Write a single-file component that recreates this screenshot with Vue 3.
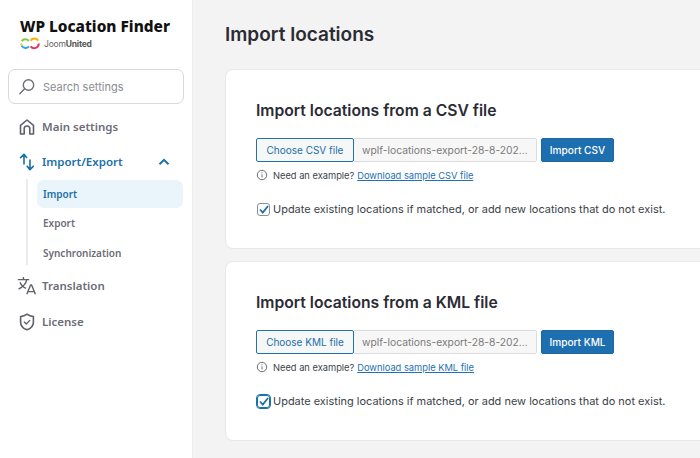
<script setup>
const cards = [
  { title: 'Import locations from a CSV file', kind: 'CSV', focus: false },
  { title: 'Import locations from a KML file', kind: 'KML', focus: true }
]
</script>

<template>
  <div class="page">
    <aside class="side">
      <div class="brand">
        <div class="brand-name">WP Location Finder</div>
        <div class="brand-sub">
          <svg width="20" height="13" viewBox="0 0 20 13" fill="none" stroke-width="2">
            <path d="M1.6 4.2A4.600 4.600 0 0 1 8.800 4" stroke="#8cc63f"/>
            <path d="M1.4 6.5a4.600 4.600 0 0 0 .2 2" stroke="#f7c600"/>
            <path d="M1.6 8.8A4.600 4.600 0 0 0 9 9.400" stroke="#29abe2"/>
            <path d="M10.6 3.6A4.600 4.600 0 0 1 18.200 3.600" stroke="#f9b000"/>
            <path d="M18.8 6.5A4.600 4.600 0 0 1 10.600 9.400" stroke="#ed2f59"/>
          </svg>
          <span class="joom">Joom<b>United</b></span>
        </div>
      </div>

      <div class="search">
        <svg width="18" height="18" viewBox="0 0 18 18" fill="none" stroke="#6f6f78" stroke-width="1.4">
          <circle cx="10.5" cy="7" r="5.2"/>
          <path d="M6.6 10.8 1.8 15.8" stroke-linecap="round"/>
        </svg>
        <span>Search settings</span>
      </div>

      <nav class="nav">
        <div class="item">
          <svg class="ico" width="20" height="20" viewBox="0 0 20 20" fill="none" stroke="#5f6069" stroke-width="1.6" stroke-linejoin="round">
            <path d="M3.5 17V8.4L10 3l6.5 5.4V17h-3.7v-5.2a2.800 2.800 0 0 0-5.600 0V17z"/>
          </svg>
          <span>Main settings</span>
        </div>

        <div class="item active">
          <svg class="ico" width="20" height="20" viewBox="0 0 20 20" fill="none" stroke="#1a70a8" stroke-width="1.6" stroke-linecap="round" stroke-linejoin="round">
            <path d="M7 12V2.500M3.600 5.600 7 2.200l2.600 3.200"/>
            <path d="M13 8v9.500M10.200 14.400l2.800 3.200 3.200-3.200"/>
          </svg>
          <span>Import/Export</span>
          <svg class="chev" width="12" height="8" viewBox="0 0 12 8" fill="none" stroke="#1a70a8" stroke-width="1.9">
            <path d="M1.5 6.2 6 1.8l4.500 4.400"/>
          </svg>
        </div>

        <div class="sub">
          <div class="sub-item current">Import</div>
          <div class="sub-item">Export</div>
          <div class="sub-item">Synchronization</div>
        </div>

        <div class="item tr">
          <svg class="ico" width="20" height="20" viewBox="0 0 20 20" fill="none" stroke="#5f6069" stroke-width="1.4" stroke-linejoin="round">
            <path d="M0.800 3.600h11.400M6.400 1v2.600M9.800 3.600C9 7.600 5.600 11 1.600 13M3 6.200c1 2.800 3.400 5 6 6.200"/>
            <path d="M9.800 18.200 13.600 9h1l3.800 9.200M11 15.600h6.400"/>
          </svg>
          <span>Translation</span>
        </div>

        <div class="item lic">
          <svg class="ico" width="20" height="20" viewBox="0 0 20 20" fill="none" stroke="#5f6069" stroke-width="1.6" stroke-linejoin="round" stroke-linecap="round">
            <path d="M10 2.200c2 1.500 4 2.200 6.400 2.400v5.600c0 3.600-2.400 6.200-6.400 7.600-4-1.400-6.400-4-6.400-7.600V4.600C6 4.400 8 3.700 10 2.200z"/>
            <path d="m7.300 10 2 2 3.500-3.600" stroke-width="1.3"/>
          </svg>
          <span>License</span>
        </div>
      </nav>
    </aside>

    <main class="main">
      <h1>Import locations</h1>
      <section v-for="c in cards" :key="c.kind" class="card">
        <h2>{{ c.title }}</h2>
        <div class="file-row">
          <button class="choose">Choose {{ c.kind }} file</button>
          <div class="fname">wplf-locations-export-28-8-202...</div>
          <button class="go">Import {{ c.kind }}</button>
        </div>
        <div class="hint">
          <svg width="12" height="12" viewBox="0 0 12 12" fill="none" stroke="#6f6f6f" stroke-width="1">
            <circle cx="6" cy="6" r="4.7"/>
            <path d="M6 5.400v3M6 3.400v1"/>
          </svg>
          <span>Need an example?</span>
          <a>Download sample {{ c.kind }} file</a>
        </div>
        <label class="check">
          <span class="box" :class="{ focus: c.focus }">
            <svg width="10" height="9" viewBox="0 0 10 9" fill="none" stroke="#1a70a8" stroke-width="1.8">
              <path d="M1 4.500 3.800 7.500 9 1"/>
            </svg>
          </span>
          <span>Update existing locations if matched, or add new locations that do not exist.</span>
        </label>
      </section>
    </main>
  </div>
</template>

<style>
html, body { margin: 0; overflow: hidden; }
</style>

<style scoped>
.page {
  display: flex;
  width: 700px;
  height: 458px;
  overflow: hidden;
  background: #f3f3f3;
  font-family: Inter, "Liberation Sans", sans-serif;
  color: #2b2b2b;
}
.side {
  flex: 0 0 193px;
  box-sizing: border-box;
  background: #fff;
  border-right: 1px solid #ececec;
  font-family: "Noto Sans", sans-serif;
}
.brand { padding: 17px 0 0 20px; height: 69px; box-sizing: border-box; }
.brand-name {
  font-size: 15.4px;
  font-weight: 800;
  line-height: 20px;
  color: #111;
  white-space: nowrap;
}
.brand-sub { display: flex; align-items: center; gap: 4px; height: 13px; }
.joom { font-family: Inter, sans-serif; font-size: 8.5px; color: #666; letter-spacing: -0.2px; }
.joom b { font-weight: 700; color: #555; }
.search {
  margin-left: 8px;
  width: 176px;
  height: 35px;
  box-sizing: border-box;
  border: 1px solid #d9d9dc;
  border-radius: 7px;
  display: flex;
  align-items: center;
  padding-left: 9px;
  gap: 7px;
  font-family: Inter, sans-serif;
  font-size: 11px;
  color: #8b8b93;
}
.nav { margin-top: 5px; }
.item {
  display: flex;
  align-items: center;
  height: 35px;
  padding-left: 17px;
  gap: 5px;
  font-size: 11.5px;
  font-weight: 600;
  color: #6c6d78;
}
.item.active { color: #1a70a8; }
.ico { flex: none; }
.chev { margin-left: 30px; }
.sub {
  margin-left: 26px;
  padding-left: 9px;
  border-left: 2px solid #ececec;
  display: flex;
  flex-direction: column;
  width: 146px;
}
.sub-item {
  height: 30px;
  line-height: 29px;
  padding-left: 6px;
  font-size: 10px;
  font-weight: 600;
  color: #6c6d78;
  border-radius: 7px;
}
.sub-item:last-child { height: 26px; }
.sub-item.current {
  height: 28px;
  line-height: 28px;
  margin: 1px 0;
  background: #eaf4fb;
  color: #1a70a8;
}
.tr { margin-top: 3px; }
.lic { margin-top: 1px; }
.main {
  flex: 0 0 507px;
  box-sizing: border-box;
  padding-left: 32px;
}
h1 {
  margin: 0;
  height: 69px;
  box-sizing: border-box;
  padding-top: 23px;
  font-size: 19px;
  line-height: 24px;
  font-weight: 600;
  color: #2b2b33;
}
.card {
  box-sizing: border-box;
  width: 520px;
  height: 180px;
  margin-bottom: 12px;
  padding: 31px 0 0 30px;
  background: #fff;
  border: 1px solid #e8e8e8;
  border-radius: 8px;
}
h2 {
  margin: 0;
  font-size: 15.7px;
  line-height: 20px;
  font-weight: 600;
  color: #2b2b33;
}
.file-row { display: flex; margin-top: 17px; height: 24px; }
button { font-family: inherit; cursor: pointer; }
.choose {
  box-sizing: border-box;
  width: 98px;
  height: 24px;
  padding: 0;
  background: #f6f7f7;
  border: 1px solid #2271b1;
  border-radius: 2px;
  font-size: 10px;
  color: #1a70a8;
}
.fname {
  box-sizing: border-box;
  width: 183px;
  height: 24px;
  padding-left: 8px;
  line-height: 22px;
  background: #f7f7f7;
  border: 1px solid #dcdcde;
  border-left: 0;
  border-radius: 0 2px 2px 0;
  font-size: 10.3px;
  color: #7b7b7b;
  white-space: nowrap;
}
.go {
  box-sizing: border-box;
  width: 73px;
  height: 24px;
  margin-left: 4px;
  padding: 0;
  background: #1d6fb0;
  border: 1px solid #1a68a5;
  border-radius: 2px;
  color: #fff;
  font-size: 10.1px;
  font-weight: 500;
}
.hint {
  display: flex;
  align-items: center;
  margin-top: 6px;
  height: 14px;
  font-size: 9.3px;
  color: #3c434a;
  white-space: nowrap;
}
.hint svg { margin-right: 5px; }
.hint a { margin-left: 3px; color: #2271b1; text-decoration: underline; }
.check {
  display: flex;
  align-items: center;
  margin-top: 19px;
  height: 16px;
  font-size: 10.97px;
  color: #3c434a;
  white-space: nowrap;
}
.box {
  box-sizing: border-box;
  flex: none;
  width: 13px;
  height: 13px;
  margin: 0 3px 0 1px;
  border: 1px solid #8c8f94;
  border-radius: 3px;
  background: #fff;
  display: flex;
  align-items: center;
  justify-content: center;
}
.box.focus {
  outline: 1px solid #1a70a8;
  border-color: #1a70a8;
}
</style>
